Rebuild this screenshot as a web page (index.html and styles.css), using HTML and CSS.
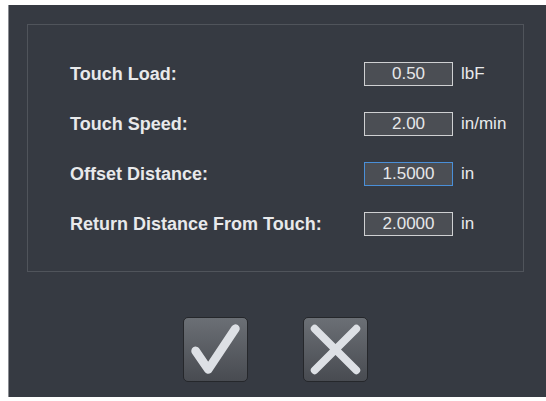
FILE: index.html
```html
<!DOCTYPE html>
<html>
<head>
<meta charset="utf-8">
<link rel="stylesheet" href="styles.css">
</head>
<body>
<div class="screen">
  <div class="panel">
    <div class="row">
      <span class="label">Touch Load:</span>
      <span class="field">0.50</span>
      <span class="unit">lbF</span>
    </div>
    <div class="row">
      <span class="label">Touch Speed:</span>
      <span class="field">2.00</span>
      <span class="unit">in/min</span>
    </div>
    <div class="row">
      <span class="label">Offset Distance:</span>
      <span class="field focused">1.5000</span>
      <span class="unit">in</span>
    </div>
    <div class="row">
      <span class="label">Return Distance From Touch:</span>
      <span class="field">2.0000</span>
      <span class="unit">in</span>
    </div>
  </div>
  <div class="actions">
    <button class="btn" aria-label="OK">
      <svg width="65" height="65" viewBox="0 0 65 65"><path d="M12 34 L25 53 L53 11" fill="none" stroke="#dde0e5" stroke-width="9" stroke-linecap="round" stroke-linejoin="round"/></svg>
    </button>
    <button class="btn" aria-label="Cancel">
      <svg width="65" height="65" viewBox="0 0 65 65"><path d="M11 11 L54 54 M54 11 L11 54" fill="none" stroke="#dde0e5" stroke-width="8" stroke-linecap="round"/></svg>
    </button>
  </div>
</div>
</body>
</html>
```
FILE: styles.css
```css
html, body {
  margin: 0;
  padding: 0;
  background: #ffffff;
}
.screen {
  margin: 5px 0 0 8px;
  width: 538px;
  height: 392px;
  background: #363a42;
  border-left: 1px solid #8a8d92;
  box-sizing: border-box;
  padding: 19px 22px 0 18px;
  font-family: "Liberation Sans", Arial, sans-serif;
}
.panel {
  height: 248px;
  border: 1px solid #50545b;
  box-sizing: border-box;
  padding: 37px 0 0 42px;
  display: flex;
  flex-direction: column;
  gap: 26px;
}
.row {
  display: grid;
  grid-template-columns: 286px 89px auto;
  column-gap: 8px;
  align-items: center;
  height: 24px;
}
.label {
  color: #e8e9eb;
  font-weight: bold;
  font-size: 18px;
}
.field {
  height: 24px;
  box-sizing: border-box;
  border: 1px solid #cfd0d2;
  background: #4b4e54;
  color: #e6e7e9;
  font-size: 17px;
  line-height: 22px;
  text-align: center;
}
.field.focused {
  border-color: #4a8fd8;
}
.unit {
  color: #e8e9eb;
  font-size: 17px;
}
.actions {
  display: flex;
  justify-content: center;
  gap: 55px;
  margin-top: 45px;
}
.btn {
  width: 65px;
  height: 65px;
  padding: 0;
  border: 1px solid #25272b;
  border-radius: 5px;
  background: linear-gradient(#6b6f75, #484b51);
  display: flex;
  align-items: center;
  justify-content: center;
}
.btn svg {
  display: block;
}
```
